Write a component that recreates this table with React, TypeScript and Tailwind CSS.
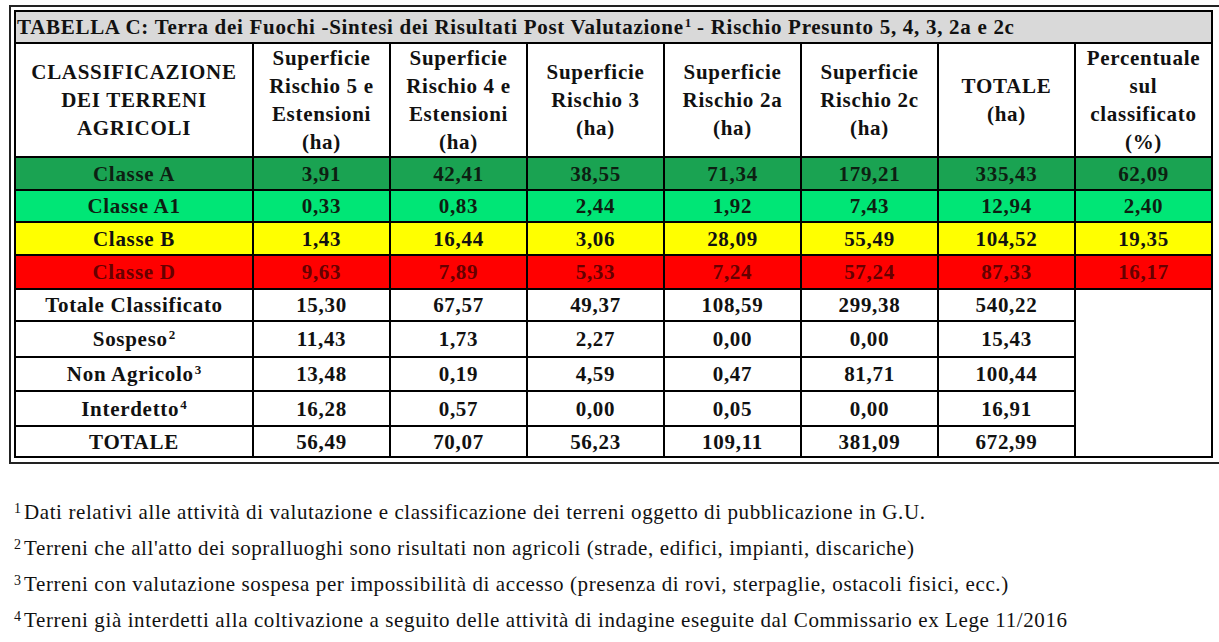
import React from "react"

type Row = {
  label: React.ReactNode
  values: string[]
  pct?: string
  bg: string
  text: string
  h: string
}

const sup = (n: string) => <sup className="text-[13px] relative -top-[7px] ml-[1px] tracking-normal">{n}</sup>

const classRows: Row[] = [
  { label: "Classe A", values: ["3,91", "42,41", "38,55", "71,34", "179,21", "335,43"], pct: "62,09", bg: "bg-[#1aa352]", text: "text-[#0d1f12]", h: "h-[33px]" },
  { label: "Classe A1", values: ["0,33", "0,83", "2,44", "1,92", "7,43", "12,94"], pct: "2,40", bg: "bg-[#00e676]", text: "text-[#0d1f12]", h: "h-[32px]" },
  { label: "Classe B", values: ["1,43", "16,44", "3,06", "28,09", "55,49", "104,52"], pct: "19,35", bg: "bg-[#ffff00]", text: "text-[#111]", h: "h-[33px]" },
  { label: "Classe D", values: ["9,63", "7,89", "5,33", "7,24", "57,24", "87,33"], pct: "16,17", bg: "bg-[#ff0000]", text: "text-[#660000]", h: "h-[34px]" },
]

const otherRows: Row[] = [
  { label: "Totale Classificato", values: ["15,30", "67,57", "49,37", "108,59", "299,38", "540,22"], bg: "bg-white", text: "text-[#111]", h: "h-[32px]" },
  { label: <>Sospeso{sup("2")}</>, values: ["11,43", "1,73", "2,27", "0,00", "0,00", "15,43"], bg: "bg-white", text: "text-[#111]", h: "h-[36px]" },
  { label: <>Non Agricolo{sup("3")}</>, values: ["13,48", "0,19", "4,59", "0,47", "81,71", "100,44"], bg: "bg-white", text: "text-[#111]", h: "h-[34px]" },
  { label: <>Interdetto{sup("4")}</>, values: ["16,28", "0,57", "0,00", "0,05", "0,00", "16,91"], bg: "bg-white", text: "text-[#111]", h: "h-[35px]" },
  { label: "TOTALE", values: ["56,49", "70,07", "56,23", "109,11", "381,09", "672,99"], bg: "bg-white", text: "text-[#111]", h: "h-[31px]" },
]

const headers: React.ReactNode[] = [
  <>Superficie<br />Rischio 5 e<br />Estensioni<br />(ha)</>,
  <>Superficie<br />Rischio 4 e<br />Estensioni<br />(ha)</>,
  <>Superficie<br />Rischio 3<br />(ha)</>,
  <>Superficie<br />Rischio 2a<br />(ha)</>,
  <>Superficie<br />Rischio 2c<br />(ha)</>,
  <>TOTALE<br />(ha)</>,
  <>Percentuale<br />sul<br />classificato<br />(%)</>,
]

const cell = "border-2 border-black text-center p-0 align-middle"

const notes = [
  { n: "1", t: "Dati relativi alle attività di valutazione e classificazione dei terreni oggetto di pubblicazione in G.U." },
  { n: "2", t: "Terreni che all'atto dei sopralluoghi sono risultati non agricoli (strade, edifici, impianti, discariche)" },
  { n: "3", t: "Terreni con valutazione sospesa per impossibilità di accesso (presenza di rovi, sterpaglie, ostacoli fisici, ecc.)" },
  { n: "4", t: "Terreni già interdetti alla coltivazione a seguito delle attività di indagine eseguite dal Commissario ex Lege 11/2016" },
]

export default function App() {
  return (
    <div className="w-[1219px] h-[642px] overflow-hidden bg-white text-[#111] [font-family:'Liberation_Serif','Times_New_Roman',serif]">
      <div className="ml-[9px] mt-[5px] w-[1220px] border-2 border-[#222] pt-[3px] pl-[3px] pb-[4px]">
        <table className="table-fixed border-collapse w-[1196px] border-2 border-black tracking-[0.7px]">
          <colgroup>
            <col className="w-[238px]" />
            {headers.map((_, i) => (
              <col key={i} className="w-[137px]" />
            ))}
          </colgroup>
          <tbody>
            <tr className="h-[32px] bg-[#d9d9d9]">
              <td colSpan={8} className="border-2 border-black pl-[1px] py-0 text-left font-bold text-[21px] leading-[28px] whitespace-nowrap">
                TABELLA C: Terra dei Fuochi -Sintesi dei Risultati Post Valutazione{sup("1")} - Rischio Presunto 5, 4, 3, 2a e 2c
              </td>
            </tr>
            <tr className="h-[113px] bg-white">
              <td className={`${cell} font-bold text-[21px] leading-[28px]`}>
                CLASSIFICAZIONE<br />DEI TERRENI<br />AGRICOLI
              </td>
              {headers.map((h, i) => (
                <td key={i} className={`${cell} font-bold text-[21px] leading-[28px]`}>
                  {h}
                </td>
              ))}
            </tr>
            {classRows.map((r, i) => (
              <tr key={i} className={`${r.h} ${r.bg} ${r.text} font-bold text-[21px] leading-[24px]`}>
                <td className={cell}>{r.label}</td>
                {r.values.map((v, j) => (
                  <td key={j} className={cell}>{v}</td>
                ))}
                <td className={cell}>{r.pct}</td>
              </tr>
            ))}
            {otherRows.map((r, i) => (
              <tr key={i} className={`${r.h} ${r.bg} ${r.text} font-bold text-[21px] leading-[24px]`}>
                <td className={cell}>{r.label}</td>
                {r.values.map((v, j) => (
                  <td key={j} className={cell}>{v}</td>
                ))}
                {i === 0 && <td rowSpan={5} className={`${cell} bg-white`} />}
              </tr>
            ))}
          </tbody>
        </table>
      </div>
      <div className="mt-[30px] pl-[14px] flex flex-col text-[21px] leading-[36px] tracking-[0.6px] text-[#111]">
        {notes.map((n) => (
          <p key={n.n} className="whitespace-nowrap">
            <sup className="text-[14px] relative -top-[6px] mr-[3px] tracking-normal">{n.n}</sup>
            {n.t}
          </p>
        ))}
      </div>
    </div>
  )
}
